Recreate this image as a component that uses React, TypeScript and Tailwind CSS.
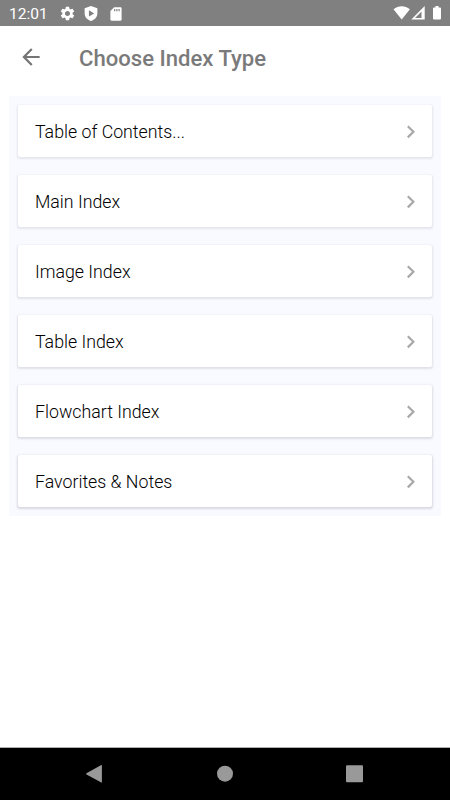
import { MdArrowBack, MdSettings } from "react-icons/md";

const items = [
  { label: "Table of Contents...", shadow: "shadow-[0_1px_2px_1px_rgba(60,60,90,0.10)]" },
  { label: "Main Index", shadow: "shadow-[0_1px_2px_1px_rgba(60,60,90,0.11)]" },
  { label: "Image Index", shadow: "shadow-[0_1px_2px_1px_rgba(60,60,90,0.12)]" },
  { label: "Table Index", shadow: "shadow-[0_1px_2px_1px_rgba(60,60,90,0.13)]" },
  { label: "Flowchart Index", shadow: "shadow-[0_1px_2px_1px_rgba(60,60,90,0.15)]" },
  { label: "Favorites & Notes", shadow: "shadow-[0_1px_2px_1px_rgba(60,60,90,0.17)]" },
];

function StatusBar() {
  return (
    <div className="flex h-[26px] shrink-0 items-center justify-between bg-[#808080] pl-[9px] pr-[8px] text-white">
      <div className="flex items-center pt-px">
        <span className="w-[49px] pt-px text-[15.5px] leading-[26px]">12:01</span>
        <MdSettings className="ml-px h-[17px] w-[17px]" />
        {/* Play Protect */}
        <svg viewBox="0 0 14 16" className="ml-[8px] h-[15px] w-[14px]" fill="currentColor">
          <path
            fillRule="evenodd"
            d="M7 0 .2 2.500v5.200C.2 11.700 3 14.800 7 16c4-1.200 6.800-4.300 6.800-8.300V2.500L7 0ZM4.800 4.600v6.600l5.600-3.300-5.600-3.300Z"
          />
        </svg>
        {/* SD card */}
        <svg viewBox="0 0 12 14" className="ml-[12px] h-[14px] w-[12px]" fill="currentColor">
          <path
            fillRule="evenodd"
            d="M4.200.2h6.200c.7 0 1.200.5 1.200 1.200v11.200c0 .7-.5 1.200-1.200 1.200H1.600c-.7 0-1.200-.5-1.200-1.200V4L4.200.2Zm-.1 1.800v2.200h1.200V2H4.100Zm2.200 0v2.200h1.200V2H6.300Zm2.200 0v2.200h1.200V2H8.500Z"
          />
        </svg>
      </div>
      <svg viewBox="0 0 50 16" className="h-[16px] w-[50px]" fill="currentColor">
        <path d="M1.500 4.300C6.500.2 12.900.2 17.900 4.300L9.700 14.400 1.500 4.300Z" />
        <path fillRule="evenodd" d="M19.300 14.500 32.700 1v13.500H19.300Zm10.200-1.500V6.500L23 13h6.500Z" />
        <path d="M43.500 1h3v1.500h1.600c.5 0 .9.400.9.900v10.200c0 .5-.4.900-.9.900h-6.200c-.5 0-.9-.4-.9-.9V3.400c0-.5.400-.9.900-.9h1.600V1Z" />
      </svg>
    </div>
  );
}

function NavBar() {
  return (
    <div className="flex h-[53px] shrink-0 justify-center border-t border-[#b0b0b0] bg-black">
      <svg viewBox="0 0 450 52" className="h-[52px] w-[450px]" fill="#999999">
        <path d="M86.500 25.200 101.300 17c.3-.2.600 0 .6.400v16.800c0 .4-.3.600-.6.400L86.500 26.400c-.5-.3-.5-.9 0-1.200Z" />
        <circle cx="225" cy="25.700" r="8" />
        <rect x="346" y="17.200" width="17" height="17" rx="1" />
      </svg>
    </div>
  );
}

export default function App() {
  return (
    <div className="flex h-screen flex-col bg-white font-[Roboto,sans-serif]">
      <StatusBar />

      <header className="flex h-[70px] shrink-0 items-center pb-[8px] pl-[18px]">
        <button aria-label="Back">
          <MdArrowBack className="h-[26px] w-[26px] text-[#757575]" />
        </button>
        <h1 className="ml-[35px] pt-[3px] text-[22.1px] font-medium text-[#7a7a7a]">Choose Index Type</h1>
      </header>

      <main className="flex-1">
        <ul className="mx-[9px] flex flex-col gap-[18px] bg-[#f9faff] p-[9px]">
          {items.map((item) => (
            <li
              key={item.label}
              className={`flex h-[52px] items-center justify-between rounded-[2px] bg-white pl-[17px] pr-[16px] ${item.shadow}`}
            >
              <span className="pt-[2px] text-[17.75px] font-light text-black">{item.label}</span>
              <svg viewBox="0 0 10 14" className="mt-px h-[14px] w-[10px]" fill="none" stroke="#a8a8a8" strokeWidth="2.200">
                <path d="m1.800 1.200 5.600 5.600-5.600 5.600" />
              </svg>
            </li>
          ))}
        </ul>
      </main>

      <NavBar />
    </div>
  );
}
